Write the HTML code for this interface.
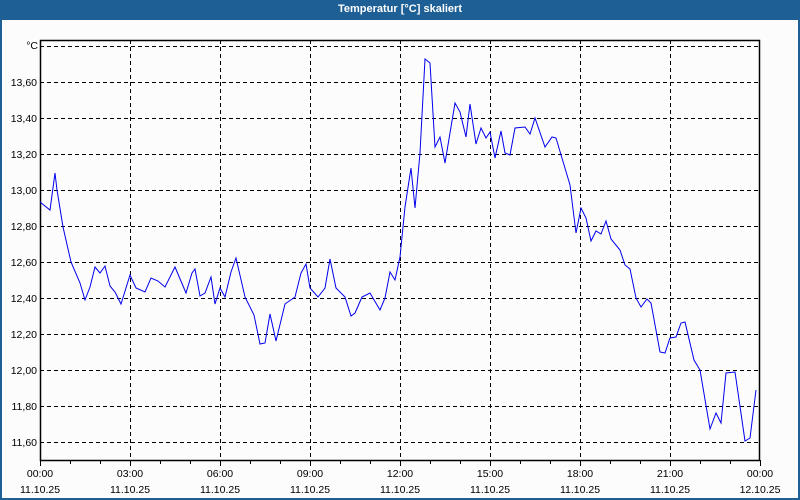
<!DOCTYPE html>
<html><head><style>
html,body{margin:0;padding:0;}
body{width:800px;height:500px;overflow:hidden;background:#1e5f96;position:relative;font-family:"Liberation Sans",sans-serif;}
.title{position:absolute;left:0;top:0;width:800px;height:20px;line-height:19px;text-align:center;color:#fff;font-weight:bold;font-size:11px;}
.inner{position:absolute;left:2px;top:20px;width:796px;height:478px;background:#fcfcfc;}
svg{position:absolute;left:0;top:0;}
text{font-family:"Liberation Sans",sans-serif;font-size:10.5px;fill:#000;}
</style></head><body>
<div class="title">Temperatur [°C] skaliert</div>
<div class="inner"></div>
<svg width="800" height="500" viewBox="0 0 800 500">
<g stroke="#000" stroke-width="1" stroke-dasharray="4,3" fill="none">
<path d="M40 46.5H760M40 82.5H760M40 118.5H760M40 154.5H760M40 190.5H760M40 226.5H760M40 262.5H760M40 298.5H760M40 334.5H760M40 370.5H760M40 406.5H760M40 442.5H760"/>
<path d="M130.5 40V460M220.5 40V460M310.5 40V460M400.5 40V460M490.5 40V460M580.5 40V460M670.5 40V460"/>
</g>
<g stroke="#000" stroke-width="1" fill="none">
<rect x="40.5" y="40.5" width="719" height="420" stroke-width="1.5"/>
<path d="M40.5 460V466M70.5 460V464M100.5 460V464M130.5 460V466M160.5 460V464M190.5 460V464M220.5 460V466M250.5 460V464M280.5 460V464M310.5 460V466M340.5 460V464M370.5 460V464M400.5 460V466M430.5 460V464M460.5 460V464M490.5 460V466M520.5 460V464M550.5 460V464M580.5 460V466M610.5 460V464M640.5 460V464M670.5 460V466M700.5 460V464M730.5 460V464M760.5 460V466"/>
</g>
<polyline fill="none" stroke="#0000ee" stroke-width="1" points="40,202 50,210 55,173 57,190 63,227 71,262 80,283 85,300 90,287 95,267 100,273 105,266 110,286 115,292 121,304 130,275 136,288 145,292 151,278 158,281 165,287 175,267 186,293 192,273 195,269 200,296 205,293 211,277 215,304 220,288 225,297 231,272 236,258 245,297 254,315 260,344 265,343 270,314 276,341 285,304 295,297 301,273 306,264 310,288 318,297 325,288 330,259 336,288 345,297 351,316 355,313 362,297 370,293 380,310 385,298 390,272 395,280 400,257 405,207 411,168 415,208 420,153 425,59 430,63 435,147 440,137 445,163 455,103 460,112 466,137 470,104 476,144 481,128 486,138 490,132 495,158 501,131 505,153 510,155 515,128 525,127 530,134 535,118 545,147 552,137 556,138 570,185 576,233 581,208 586,218 591,241 596,231 601,234 606,221 611,239 620,250 625,265 630,269 636,298 641,307 647,299 651,303 660,352 665,353 670,338 676,337 681,323 685,322 694,360 700,370 710,429 716,413 721,423 726,373 735,372 745,441 750,438 756,390"/>
<g text-anchor="end">
<text x="38" y="49">°C</text>
<text x="37" y="86">13,60</text>
<text x="37" y="122">13,40</text>
<text x="37" y="158">13,20</text>
<text x="37" y="194">13,00</text>
<text x="37" y="230">12,80</text>
<text x="37" y="266">12,60</text>
<text x="37" y="302">12,40</text>
<text x="37" y="338">12,20</text>
<text x="37" y="374">12,00</text>
<text x="37" y="410">11,80</text>
<text x="37" y="446">11,60</text>
</g>
<g text-anchor="middle">
<text x="40" y="477">00:00</text><text x="40" y="493">11.10.25</text>
<text x="130" y="477">03:00</text><text x="130" y="493">11.10.25</text>
<text x="220" y="477">06:00</text><text x="220" y="493">11.10.25</text>
<text x="310" y="477">09:00</text><text x="310" y="493">11.10.25</text>
<text x="400" y="477">12:00</text><text x="400" y="493">11.10.25</text>
<text x="490" y="477">15:00</text><text x="490" y="493">11.10.25</text>
<text x="580" y="477">18:00</text><text x="580" y="493">11.10.25</text>
<text x="670" y="477">21:00</text><text x="670" y="493">11.10.25</text>
<text x="760" y="477">00:00</text><text x="760" y="493">12.10.25</text>
</g>
</svg>
</body></html>
